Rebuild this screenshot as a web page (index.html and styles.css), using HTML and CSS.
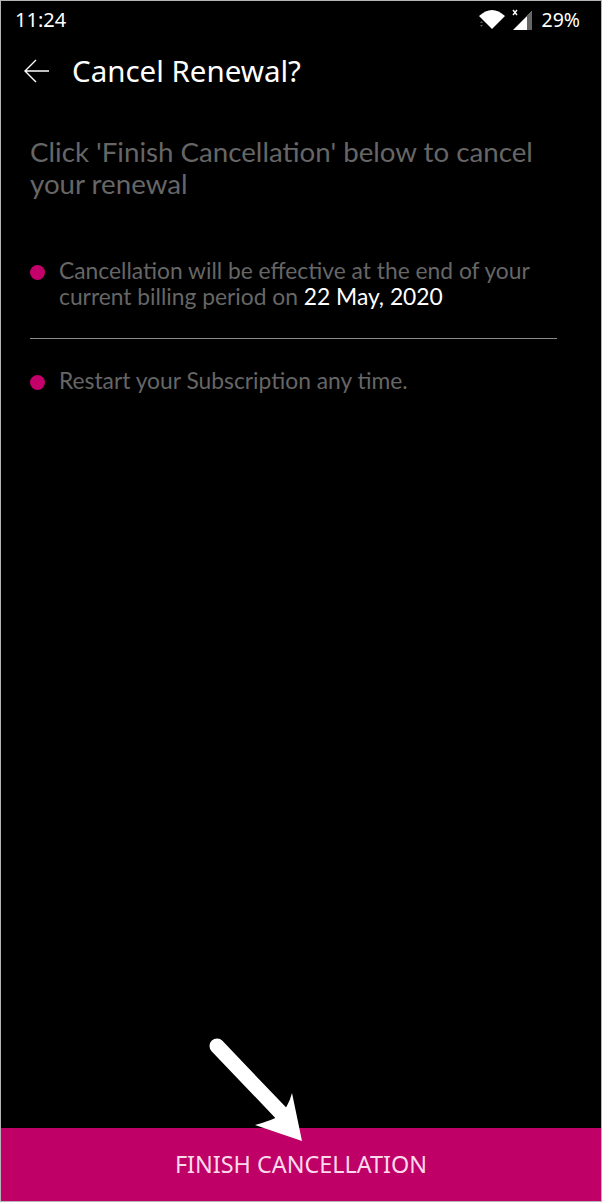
FILE: index.html
```html
<!DOCTYPE html>
<html lang="en">
<head>
  <meta charset="UTF-8" />
  <title>Cancel Renewal?</title>
  <link rel="stylesheet" href="styles.css">
</head>
<body>
  <div class="phone">
    <div class="status-bar">
      <span class="clock">11:24</span>
      <div class="status-icons">
        <svg class="wifi" width="28" height="20" viewBox="0 0 28 20">
          <path d="M1 6 Q14 -6 27 6 L14 19 Z" fill="#fff"/>
          <path d="M2 13h3l-1.500-2zM2 15h3l-1.500 2z" fill="#555"/>
        </svg>
        <svg class="signal" width="30" height="24" viewBox="0 0 30 24">
          <path d="M8 2l4 5M12 2l-4 5" stroke="#fff" stroke-width="1.400" fill="none"/>
          <path d="M27 3v19H8Z" fill="#fff"/>
          <path d="M22 8v14h5V3Z" fill="#666"/>
        </svg>
        <span class="battery">29%</span>
      </div>
    </div>

    <div class="toolbar">
      <svg class="back" width="28" height="24" viewBox="0 0 28 24">
        <path d="M26 12H2M13 1 2 12l11 11" stroke="#fff" stroke-width="1.400" fill="none"/>
      </svg>
      <h1>Cancel Renewal?</h1>
    </div>

    <div class="content">
      <p class="lead">Click 'Finish Cancellation' below to cancel your renewal</p>
      <div class="point">
        <span class="dot"></span>
        <p>Cancellation will be effective at the end of your current billing period on <b>22 May, 2020</b></p>
      </div>
      <div class="divider"></div>
      <div class="point">
        <span class="dot"></span>
        <p>Restart your Subscription any time.</p>
      </div>
    </div>

    <button class="finish-btn">FINISH CANCELLATION</button>

    <svg class="pointer" width="104" height="110" viewBox="0 0 104 110">
      <path d="M16 13 80 80" stroke="#fff" stroke-width="15" stroke-linecap="round" fill="none"/>
      <path d="M91 60 101 108 54 92Q72 87 78 83 87 75 91 60Z" fill="#fff"/>
    </svg>
  </div>
</body>
</html>
```

FILE: styles.css
```css
* {
  box-sizing: border-box;
}

body {
  margin: 0;
  font-family: "Noto Sans", sans-serif;
  background: #fff;
}

.phone {
  position: relative;
  width: 602px;
  height: 1202px;
  background: #000;
  border: 1px solid #b5b5b5;
  display: flex;
  flex-direction: column;
  overflow: hidden;
}

.status-bar {
  height: 37px;
  padding: 0 21px 0 14px;
  display: flex;
  align-items: center;
  justify-content: space-between;
  color: #fff;
  font-size: 20px;
}

.status-icons {
  display: flex;
  align-items: center;
  gap: 0;
}

.signal {
  margin-left: -1px;
}

.battery {
  margin-left: 6px;
  font-size: 19.500px;
}

.toolbar {
  height: 65px;
  padding: 0 0 0 22px;
  display: flex;
  align-items: center;
  gap: 21px;
}

.toolbar h1 {
  margin: 0;
  color: #fff;
  font-size: 29.500px;
  font-weight: 400;
}

.content {
  flex: 1;
  padding: 33px 44px 0 29px;
  font-family: Lato, sans-serif;
  color: #666;
}

.lead {
  margin: 0 0 57px;
  font-size: 27.700px;
  line-height: 32px;
}

.point {
  display: flex;
  gap: 14px;
}

.point p {
  margin: 0;
  font-size: 22.800px;
  line-height: 26px;
}

.point b {
  color: #fff;
  font-weight: 400;
}

.dot {
  width: 15px;
  height: 15px;
  margin-top: 8px;
  flex-shrink: 0;
  border-radius: 50%;
  background: #c4006b;
}

.divider {
  height: 1px;
  margin: 29px 0 28px;
  background: #8a8a8a;
}

.finish-btn {
  height: 73px;
  padding: 0 0 1px;
  border: none;
  background: #bf0067;
  color: #fbd9ec;
  font-family: "Noto Sans", sans-serif;
  font-size: 23.400px;
}

.pointer {
  position: absolute;
  left: 200px;
  top: 1032px;
}
```
